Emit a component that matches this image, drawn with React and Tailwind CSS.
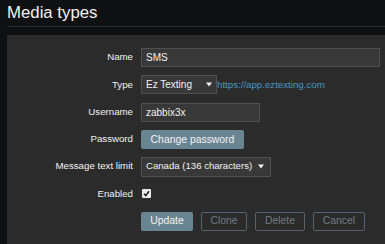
import React from 'react';

const font = { fontFamily: '"Liberation Sans", Arial, sans-serif' };

function Caret() {
  return (
    <svg width="6" height="5" viewBox="0 0 6 5" className="shrink-0">
      <path d="M0 0.5 L6 0.5 L3 4.5 Z" fill="#f2f2f2" />
    </svg>
  );
}

function Label({ children }) {
  return <div className="flex h-[19px] items-center justify-end text-[#f2f2f2]">{children}</div>;
}

export default function App() {
  return (
    <div style={font} className="h-[244px] w-[385px] overflow-hidden bg-[#0e1012] text-[9.7px]">
      {/* Header */}
      <div className="ml-[7px] pt-[3px]">
        <h1 className="h-[20px] text-[16.8px] leading-[20px] text-[#f2f2f2]">Media types</h1>
        <div className="mt-[3px] h-px bg-[#2a2b2c]" />
      </div>

      {/* Form panel */}
      <div className="ml-[7px] mt-[8px] h-[220px] bg-[#2b2b2b] pt-[13px]">
        <div className="grid grid-cols-[126px_1fr] gap-x-2 gap-y-[8.3px]">
          <Label>Name</Label>
          <div className="flex h-[19px] w-[239px] items-center border border-[#4f4f4f] bg-[#383838] px-[4px] text-[10px] text-[#f2f2f2]">
            SMS
          </div>

          <Label>Type</Label>
          <div className="flex h-[19px] items-center">
            <div className="flex h-[19px] w-[76px] items-center justify-between border border-[#4f4f4f] bg-[#383838] pl-[4px] pr-[4px] text-[10px] text-[#f2f2f2]">
              <span>Ez Texting</span>
              <Caret />
            </div>
            <span className="text-[#4796c4]">https://app.eztexting.com</span>
          </div>

          <Label>Username</Label>
          <div className="flex h-[19px] w-[119px] items-center border border-[#4f4f4f] bg-[#383838] px-[4px] text-[10px] text-[#f2f2f2]">
            zabbix3x
          </div>

          <Label>Password</Label>
          <div className="flex h-[19px] items-center">
            <button className="flex h-[19px] w-[103px] items-center justify-center rounded-[2px] bg-[#6a8592] text-[10.4px] text-[#f2f2f2]">
              Change password
            </button>
          </div>

          <Label>Message text limit</Label>
          <div className="flex h-[19px] items-center">
            <div className="flex h-[20px] w-[130px] items-center justify-between border border-[#4f4f4f] bg-[#383838] pl-[4px] pr-[6px] text-[9.6px] text-[#f2f2f2]">
              <span>Canada (136 characters)</span>
              <Caret />
            </div>
          </div>

          <Label>Enabled</Label>
          <div className="flex h-[19px] items-center pl-px">
            <div className="flex h-[9px] w-[9px] items-center justify-center rounded-[1px] bg-[#ececec]">
              <svg width="7" height="7" viewBox="0 0 7 7">
                <path d="M1 3.8 L2.8 5.6 L6 1.2" stroke="#1a1a1a" strokeWidth="1.5" fill="none" />
              </svg>
            </div>
          </div>

          <div />
          <div className="flex h-[19px] items-center gap-2 text-[10.4px]">
            <button className="flex h-[19px] w-[52px] items-center justify-center rounded-[2px] bg-[#6a8592] text-[#f2f2f2]">
              Update
            </button>
            <button className="flex h-[19px] w-[46px] items-center justify-center rounded-[2px] border border-[#55626a] text-[#6f7b80]">
              Clone
            </button>
            <button className="flex h-[19px] w-[50px] items-center justify-center rounded-[2px] border border-[#55626a] text-[#6f7b80]">
              Delete
            </button>
            <button className="flex h-[19px] w-[52px] items-center justify-center rounded-[2px] border border-[#55626a] text-[#6f7b80]">
              Cancel
            </button>
          </div>
        </div>
      </div>
    </div>
  );
}
